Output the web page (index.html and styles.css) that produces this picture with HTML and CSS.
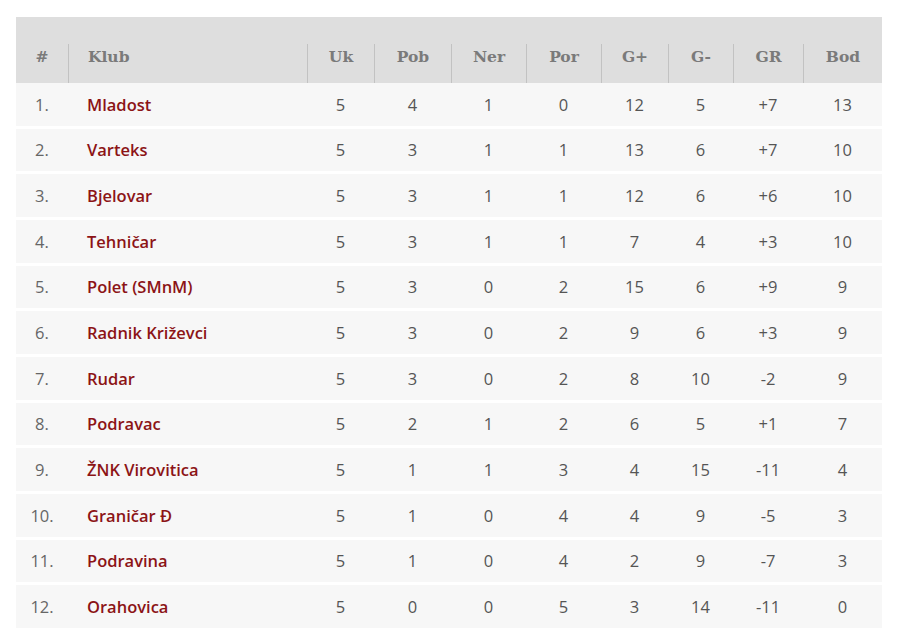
FILE: index.html
```html
<!DOCTYPE html>
<html lang="hr">
<head>
<meta charset="utf-8">
<title>Tablica</title>
<link rel="stylesheet" href="styles.css">
</head>
<body>
<div class="page">
  <div class="table">
    <div class="thead">
      <div class="th c">#</div>
      <div class="th l sep">Klub</div>
      <div class="th c sep">Uk</div>
      <div class="th c sep">Pob</div>
      <div class="th c sep">Ner</div>
      <div class="th c sep">Por</div>
      <div class="th c sep">G+</div>
      <div class="th c sep">G-</div>
      <div class="th c sep">GR</div>
      <div class="th c sep">Bod</div>
    </div>
    <div class="row"><span class="pos">1.</span><span class="club">Mladost</span><span>5</span><span>4</span><span>1</span><span>0</span><span>12</span><span>5</span><span>+7</span><span>13</span></div>
    <div class="row"><span class="pos">2.</span><span class="club">Varteks</span><span>5</span><span>3</span><span>1</span><span>1</span><span>13</span><span>6</span><span>+7</span><span>10</span></div>
    <div class="row"><span class="pos">3.</span><span class="club">Bjelovar</span><span>5</span><span>3</span><span>1</span><span>1</span><span>12</span><span>6</span><span>+6</span><span>10</span></div>
    <div class="row"><span class="pos">4.</span><span class="club">Tehničar</span><span>5</span><span>3</span><span>1</span><span>1</span><span>7</span><span>4</span><span>+3</span><span>10</span></div>
    <div class="row"><span class="pos">5.</span><span class="club">Polet (SMnM)</span><span>5</span><span>3</span><span>0</span><span>2</span><span>15</span><span>6</span><span>+9</span><span>9</span></div>
    <div class="row"><span class="pos">6.</span><span class="club">Radnik Križevci</span><span>5</span><span>3</span><span>0</span><span>2</span><span>9</span><span>6</span><span>+3</span><span>9</span></div>
    <div class="row"><span class="pos">7.</span><span class="club">Rudar</span><span>5</span><span>3</span><span>0</span><span>2</span><span>8</span><span>10</span><span>-2</span><span>9</span></div>
    <div class="row"><span class="pos">8.</span><span class="club">Podravac</span><span>5</span><span>2</span><span>1</span><span>2</span><span>6</span><span>5</span><span>+1</span><span>7</span></div>
    <div class="row"><span class="pos">9.</span><span class="club">ŽNK Virovitica</span><span>5</span><span>1</span><span>1</span><span>3</span><span>4</span><span>15</span><span>-11</span><span>4</span></div>
    <div class="row"><span class="pos">10.</span><span class="club">Graničar Đ</span><span>5</span><span>1</span><span>0</span><span>4</span><span>4</span><span>9</span><span>-5</span><span>3</span></div>
    <div class="row"><span class="pos">11.</span><span class="club">Podravina</span><span>5</span><span>1</span><span>0</span><span>4</span><span>2</span><span>9</span><span>-7</span><span>3</span></div>
    <div class="row"><span class="pos">12.</span><span class="club">Orahovica</span><span>5</span><span>0</span><span>0</span><span>5</span><span>3</span><span>14</span><span>-11</span><span>0</span></div>
  </div>
</div>
</body>
</html>
```
FILE: styles.css
```css
html, body {
  margin: 0;
  padding: 0;
  background: #ffffff;
}
.page {
  padding: 17px 18px 0 16px;
}
.table {
  width: 866px;
  display: flex;
  flex-direction: column;
  gap: 3px;
}
.thead,
.row {
  display: grid;
  grid-template-columns: 52px 239px 67px 77px 75px 75px 67px 65px 70px 79px;
}
.thead {
  height: 66px;
  background: #dedede;
  align-items: end;
  margin-bottom: -3px;
}
.th {
  height: 39px;
  line-height: 26px;
  font-family: "DejaVu Serif", "Liberation Serif", serif;
  font-weight: bold;
  font-size: 15.5px;
  color: #7a7a7a;
  box-sizing: border-box;
}
.th.sep {
  border-left: 1px solid #c2c2c2;
}
.th.c {
  text-align: center;
}
.th.l {
  padding-left: 19px;
}
.row {
  height: 42.67px;
  background: #f7f7f7;
  align-items: center;
  font-family: "Open Sans", sans-serif;
  font-size: 16.5px;
  color: #555555;
  text-align: center;
}
.row .pos {
  color: #666666;
}
.row .club {
  text-align: left;
  padding-left: 19px;
  font-weight: 600;
  color: #8c1416;
}
```
